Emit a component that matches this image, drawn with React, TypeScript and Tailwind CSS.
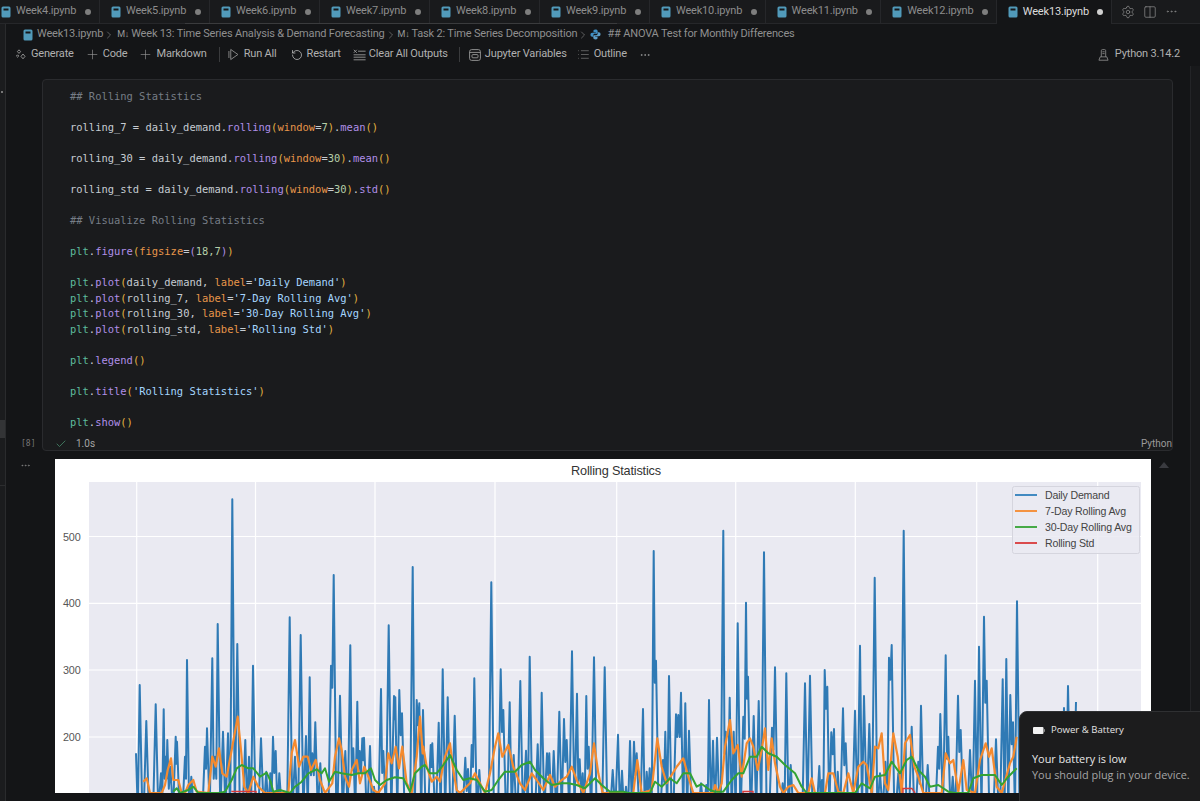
import { ChevronRight, Check, Ellipsis, List, Plus, RotateCcw, Settings, Columns2 } from 'lucide-react';

type Point = [number, number];

// chart points are read off three crops of the plot, so each strip has its own origin
const strip = (originX: number, pts: Point[]): Point[] =>
  pts.map(([x, y]) => [originX + x / 3, 490 + y / 3]);

const blue: Point[] = [
  ...strip(125, [[33,790],[44,585],[64,693],[92,643],[108,850],[116,658],[122,800],[127,750],[136,830],[152,740],[156,755],[180,800],[186,510],[199,860],[240,770],[246,715],[262,505],[270,800],[278,402],[294,725],[309,730],[322,28],[337,462],[361,750],[372,800],[384,527],[408,745],[424,845],[436,850],[444,740],[452,783],[463,850],[494,382],[510,800],[527,435],[543,738],[554,562],[562,790],[571,697],[586,820],[618,527],[626,255],[645,617],[661,783],[676,466],[685,775],[697,635],[704,783],[712,745],[717,743],[735,768],[747,890],[768,597],[775,783],[791,406],[807,618],[811,622],[823,600],[831,670],[863,231],[875,630],[883,640],[894,660]]),
  ...strip(420, [[32,765],[37,760],[56,698],[68,538],[83,622],[104,677],[136,803],[144,837],[155,765],[163,565],[178,840],[214,277],[242,538],[250,660],[269,637],[281,795],[301,573],[318,782],[329,500],[353,763],[365,608],[381,790],[388,790],[401,783],[418,665],[432,687],[440,750],[456,484],[471,611],[479,808],[488,850],[499,618],[506,770],[522,502],[554,532],[578,840],[594,734],[606,842],[618,890],[630,753],[642,755],[650,790],[669,657],[680,845],[689,835],[701,183],[708,512],[729,810],[736,725],[747,558],[768,673],[775,675],[783,608],[796,640],[807,722],[843,880],[859,885],[867,630],[879,752],[891,743]]),
  ...strip(715, [[25,122],[32,725],[44,623],[56,725],[68,400],[85,680],[93,338],[99,560],[116,678],[131,633],[147,187],[171,713],[180,532],[203,880],[214,550],[227,825],[270,580],[285,557],[313,828],[321,870],[329,540],[337,590],[349,727],[357,717],[368,845],[384,655],[392,760],[420,662],[435,467],[447,618],[463,702],[479,263],[495,850],[511,815],[522,503],[530,465],[550,850],[566,122],[590,710],[610,815],[618,647],[638,825],[669,770],[676,672],[692,496],[700,740],[713,860],[729,617],[737,720],[765,780],[780,572],[792,470],[807,380],[815,572],[843,748],[863,568],[874,507],[886,615],[894,697],[906,334]]),
  [1064, 708],
  [1068, 686],
  [1076, 702],
];

const orange: Point[] = [
  ...strip(125, [[55,875],[65,865],[75,909],[110,909],[120,885],[128,840],[138,805],[145,870],[160,870],[170,909],[180,909],[190,885],[205,870],[215,905],[250,909],[262,800],[272,830],[282,775],[292,850],[305,860],[320,780],[338,680],[348,780],[358,890],[370,909],[385,860],[400,890],[420,909],[470,909],[490,909],[500,790],[510,750],[522,830],[535,800],[548,800],[558,840],[572,810],[585,870],[600,909],[622,880],[630,800],[642,745],[650,780],[660,860],[672,890],[680,840],[695,810],[705,880],[718,830],[730,860],[745,900],[760,909],[780,880],[790,790],[800,820],[812,770],[822,835],[832,770],[845,880],[860,909],[875,800],[885,680],[893,790]]),
  ...strip(420, [[10,770],[20,830],[35,875],[50,860],[60,875],[75,800],[90,760],[100,840],[110,900],[120,909],[150,880],[165,850],[180,880],[195,909],[210,850],[225,770],[235,730],[247,800],[265,765],[280,830],[300,880],[315,900],[335,850],[350,870],[370,900],[390,855],[405,890],[425,870],[440,860],[455,830],[470,870],[490,909],[510,850],[522,760],[535,850],[548,909],[640,909],[652,810],[665,909],[695,900],[712,745],[725,830],[740,880],[755,855],[770,830],[790,805],[805,860],[820,909],[880,909]]),
  ...strip(715, [[0,885],[10,909],[20,880],[30,770],[45,690],[55,790],[68,765],[80,860],[95,760],[105,745],[115,770],[128,840],[140,780],[150,715],[160,840],[170,745],[180,820],[195,890],[205,909],[220,890],[235,885],[250,909],[280,909],[290,865],[300,909],[330,909],[340,850],[355,850],[370,905],[385,909],[400,850],[415,909],[430,830],[445,815],[455,825],[470,909],[480,770],[490,775],[500,730],[510,880],[520,900],[535,730],[548,800],[560,909],[570,760],[585,735],[598,830],[610,860],[625,909],[680,909],[692,790],[705,820],[715,810],[730,905],[745,810],[755,900],[780,909],[795,810],[812,760],[822,800],[830,775],[845,890],[860,909],[885,820],[895,800],[905,740]]),
];

const green: Point[] = [
  ...strip(125, [[145,905],[155,895],[165,909],[190,900],[205,890],[220,909],[280,909],[300,905],[320,870],[335,835],[350,825],[370,835],[385,835],[405,860],[425,848],[437,875],[445,905],[465,900],[495,909],[510,890],[530,875],[550,850],[575,838],[590,850],[600,835],[612,875],[630,845],[650,850],[680,855],[700,850],[720,850],[738,835],[750,870],[765,885],[785,870],[810,862],[835,865],[855,905],[870,850],[890,830],[900,825]]),
  ...strip(420, [[30,850],[50,850],[70,825],[90,795],[110,840],[130,870],[150,865],[170,870],[195,905],[215,900],[235,870],[255,845],[285,845],[305,825],[330,815],[345,840],[370,865],[395,885],[425,880],[445,880],[470,885],[495,895],[525,865],[545,885],[570,905],[610,905],[625,909],[690,909],[705,875],[725,890],[750,865],[770,880],[790,850],[810,850],[830,890],[845,882],[870,900]]),
  ...strip(715, [[0,905],[25,905],[50,870],[70,850],[85,850],[105,800],[125,800],[140,770],[160,790],[185,800],[210,825],[240,850],[260,890],[275,909],[420,909],[440,880],[465,895],[480,860],[510,855],[530,815],[555,850],[575,810],[590,800],[610,840],[630,860],[645,890],[670,885],[700,905],[720,909],[760,909],[775,865],[800,855],[840,855],[860,885],[880,860],[905,835]]),
];

const spikes = (peaks: Point[]) => {
  const out: Point[] = [];
  const floor = 812;
  peaks.forEach(([x, y], i) => {
    if (i > 0) {
      const [px, py] = peaks[i - 1];
      const gap = x - px;
      if (gap <= 3) out.push([px + gap / 2, Math.max(y, py) + 22]);
      else if (gap <= 5.5) out.push([px + gap / 2, floor]);
      else {
        out.push([px + 2.6, floor]);
        out.push([x - 2.6, floor]);
      }
    }
    out.push([x, y]);
  });
  return out;
};

const toPath = (pts: Point[]) => pts.map(([x, y]) => `${x.toFixed(1)},${y.toFixed(1)}`).join(' ');

const gridX = [136.7, 255.5, 375, 495, 616.7, 735.7, 855.3, 976.7, 1097.7];
const ticks = [
  { label: '500', y: 536.5 },
  { label: '400', y: 603.3 },
  { label: '300', y: 670 },
  { label: '200', y: 737 },
];
const legend = [
  { label: 'Daily Demand', color: '#2f7fbb', y: 495 },
  { label: '7-Day Rolling Avg', color: '#f58a2e', y: 511 },
  { label: '30-Day Rolling Avg', color: '#35a335', y: 527 },
  { label: 'Rolling Std', color: '#d8393a', y: 543 },
];

const V = 'text-[#c6ccd2]';
const C = 'text-[#767d86]';
const F = 'text-[#b08fe8]';
const P = 'text-[#e3b341]';
const K = 'text-[#e8964a]';
const M = 'text-[#5dbb9d]';
const N = 'text-[#b5cea8]';
const S = 'text-[#a5d6ff]';
const Q = 'text-[#b08fe8]';

type Tok = [string, string];

const plotLine = (arg: string, label: string): Tok[] => [
  ['plt', M], ['.', V], ['plot', F], ['(', P], [arg + ', ', V], ['label', K], ['=', V], [`'${label}'`, S], [')', P],
];

const code: Tok[][] = [
  [['## Rolling Statistics', C]],
  [],
  [['rolling_7 = daily_demand.', V], ['rolling', F], ['(', P], ['window', K], ['=', V], ['7', N], [')', P], ['.', V], ['mean', F], ['()', P]],
  [],
  [['rolling_30 = daily_demand.', V], ['rolling', F], ['(', P], ['window', K], ['=', V], ['30', N], [')', P], ['.', V], ['mean', F], ['()', P]],
  [],
  [['rolling_std = daily_demand.', V], ['rolling', F], ['(', P], ['window', K], ['=', V], ['30', N], [')', P], ['.', V], ['std', F], ['()', P]],
  [],
  [['## Visualize Rolling Statistics', C]],
  [],
  [['plt', M], ['.', V], ['figure', F], ['(', P], ['figsize', K], ['=', V], ['(', Q], ['18,7', N], [')', Q], [')', P]],
  [],
  plotLine('daily_demand', 'Daily Demand'),
  plotLine('rolling_7', '7-Day Rolling Avg'),
  plotLine('rolling_30', '30-Day Rolling Avg'),
  plotLine('rolling_std', 'Rolling Std'),
  [],
  [['plt', M], ['.', V], ['legend', F], ['()', P]],
  [],
  [['plt', M], ['.', V], ['title', F], ['(', P], ["'Rolling Statistics'", S], [')', P]],
  [],
  [['plt', M], ['.', V], ['show', F], ['()', P]],
];

const tabs = ['Week4', 'Week5', 'Week6', 'Week7', 'Week8', 'Week9', 'Week10', 'Week11', 'Week12', 'Week13'];

function NotebookIcon({ className = '' }: { className?: string }) {
  return (
    <svg viewBox="0 0 10 12" className={`w-[10px] h-[12px] shrink-0 ${className}`}>
      <rect x="0.5" y="0.5" width="9" height="11" rx="1.5" fill="#519aba" />
      <rect x="2.5" y="2.5" width="5" height="2" fill="#16181b" />
    </svg>
  );
}

function SparkIcon() {
  return (
    <svg viewBox="0 0 12 12" className="w-[12px] h-[12px] text-[#9a9a9a]" fill="none" stroke="currentColor" strokeWidth="0.9">
      <path d="M4 0.8 5.6 2.6 4 4.4 2.4 2.6Z" />
      <path d="M2.6 5.8 3.8 7 2.6 8.2 1.4 7Z" />
      <path d="M8 5 10 7.4 8 9.8 6 7.4Z" />
    </svg>
  );
}

function RunAllIcon() {
  return (
    <svg viewBox="0 0 12 14" className="w-[11px] h-[13px] text-[#8d8d8d]" fill="none" stroke="currentColor" strokeWidth="1">
      <path d="M3 1.5 10.8 7 3 12.5Z" />
      <path d="M1 3.2V10.8" />
    </svg>
  );
}

function ClearIcon() {
  return (
    <svg viewBox="0 0 13 12" className="w-[13px] h-[12px] text-[#9a9a9a]" fill="none" stroke="currentColor" strokeWidth="0.9">
      <path d="M0.8 0.8 3.8 3.8M3.8 0.8 0.8 3.8" />
      <path d="M5 2.2H12.6M0.6 5.8H12.6M0.6 8.2H12.6M0.6 10.8H12.6" />
    </svg>
  );
}

function VariablesIcon() {
  return (
    <svg viewBox="0 0 12 12" className="w-[12px] h-[12px] text-[#9a9a9a]" fill="none" stroke="currentColor" strokeWidth="0.9">
      <rect x="0.6" y="0.6" width="10.8" height="10.8" rx="2" />
      <path d="M0.6 3.4H11.4" />
      <rect x="3" y="5.6" width="6" height="3.2" rx="0.8" />
    </svg>
  );
}

function EnvIcon() {
  return (
    <svg viewBox="0 0 12 13" className="w-[11px] h-[12px] text-[#8f8f8f]" fill="none" stroke="currentColor" strokeWidth="0.9">
      <path d="M3.6 8.5V1.8A1.2 1.2 0 0 1 4.8 0.6H7.2A1.2 1.2 0 0 1 8.4 1.8V8.5" />
      <path d="M4.8 3H7.2M4.8 5H7.2" />
      <path d="M2.4 8.5H9.6L11 12.2H1Z" />
    </svg>
  );
}

function PythonIcon() {
  return (
    <svg viewBox="0 0 12 12" className="w-[11px] h-[11px] shrink-0">
      <path d="M6 0.5C3.8 0.5 3.8 1.5 3.8 2.4V3.5H6.3V4H2.4C1.2 4 .5 5 .5 6.2S1.2 8.4 2.4 8.4H3.5V7C3.5 6 4.3 5.3 5.2 5.3H7.4C8 5.3 8.4 4.8 8.4 4.2V2.4C8.4 1.2 7.4 .5 6 .5Z" fill="#3f8fc4" />
      <path d="M6 11.5C8.2 11.5 8.2 10.5 8.2 9.6V8.5H5.7V8H9.6C10.8 8 11.5 7 11.5 5.8S10.8 3.6 9.6 3.6H8.5V5C8.5 6 7.7 6.7 6.8 6.7H4.6C4 6.7 3.6 7.2 3.6 7.8V9.6C3.6 10.8 4.6 11.5 6 11.5Z" fill="#5d9fc9" />
    </svg>
  );
}

function Tab({ name, active }: { name: string; active: boolean }) {
  const wide = name.length > 5;
  return (
    <div
      className={`flex h-[24px] shrink-0 items-center pl-[11px] pr-[8px] border-r border-[#26272a] ${wide ? 'w-[115.6px]' : 'w-[110px]'} ${active ? 'bg-[#141517] text-[#dcdcdc]' : 'bg-[#191a1c] text-[#8c8c8c] border-b'}`}
    >
      <NotebookIcon />
      <span className="ml-[5px] mr-auto">{name}.ipynb</span>
      <span className={`w-[6px] h-[6px] rounded-full ${active ? 'bg-[#d0d0d0]' : 'bg-[#7e7e7e]'}`} />
    </div>
  );
}

function Chart() {
  return (
    <svg viewBox="55 459 1096 334" className="block w-[1096px] h-[334px] bg-white">
      <rect x="89" y="482" width="1052" height="311" fill="#eaeaf2" />
      {gridX.map((x) => (
        <line key={x} x1={x} x2={x} y1="482" y2="793" stroke="#ffffff" strokeWidth="1.2" />
      ))}
      {ticks.map((t) => (
        <g key={t.label}>
          <line x1="89" x2="1141" y1={t.y} y2={t.y} stroke="#ffffff" strokeWidth="1.2" />
          <text x="80.5" y={t.y + 4} textAnchor="end" fontSize="10.8" fill="#555" fontFamily="'Liberation Sans', sans-serif">
            {t.label}
          </text>
        </g>
      ))}
      <text x="616" y="475" textAnchor="middle" fontSize="12.7" fill="#333" fontFamily="'Liberation Sans', sans-serif">
        Rolling Statistics
      </text>
      <polyline points={toPath(spikes(blue))} fill="none" stroke="#2f7ab5" strokeWidth="2" strokeLinejoin="round" />
      <polyline points={toPath(orange)} fill="none" stroke="#f58a2e" strokeWidth="2.2" strokeLinejoin="round" />
      <polyline points={toPath(green)} fill="none" stroke="#33a333" strokeWidth="2" strokeLinejoin="round" />
      <path d="M232 792V791.5H256V793M743 793V791.5H753V793M903 793V788.5H912L915 793" fill="none" stroke="#d8393a" strokeWidth="1.4" />
      <rect x="1012.5" y="486.5" width="127" height="67" rx="2" fill="#eaeaf2" fillOpacity="0.85" stroke="#d5d5de" />
      {legend.map((l) => (
        <g key={l.label}>
          <line x1="1015" x2="1037" y1={l.y} y2={l.y} stroke={l.color} strokeWidth="1.8" />
          <text x="1045" y={l.y + 4} fontSize="10.6" fill="#444" fontFamily="'Liberation Sans', sans-serif">
            {l.label}
          </text>
        </g>
      ))}
    </svg>
  );
}

export default function App() {
  return (
    <div className="relative flex h-[801px] w-[1200px] overflow-hidden bg-[#141517] font-['Roboto',sans-serif] text-[11px] tracking-[-0.18px] text-[#a8a8a8]">
      <div className="flex w-[6px] shrink-0 flex-col border-r border-[#2a2b2d] bg-[#1b1c1e]">
        <div className="ml-[1px] mt-[91px] h-[2px] w-[2px] bg-[#777]" />
        <div className="mt-[327px] h-[18px] w-full bg-[#333436]" />
        <div className="mt-[47px] h-px w-full bg-[#2c2d2f]" />
      </div>

      <div className="flex min-w-0 flex-1 flex-col">
        <div className="relative flex h-[24px] shrink-0 bg-[#191a1c]">
          <div className="-ml-[16px] flex">
            {tabs.map((t) => (
              <Tab key={t} name={t} active={t === 'Week13'} />
            ))}
          </div>
          <div className="flex flex-1 items-center gap-[8px] border-b border-[#26272a] pl-[9px] text-[#8f8f8f]">
            <Settings size={14} strokeWidth={1.2} />
            <Columns2 size={14} strokeWidth={1.2} />
            <Ellipsis size={13} strokeWidth={1.2} />
          </div>
          <div className="absolute bottom-0 left-[179px] h-px w-[432px] bg-[#3a3b3d]" />
        </div>

        <div className="flex h-[21px] shrink-0 items-center pl-[17px] whitespace-nowrap text-[#8f8f8f]">
          <NotebookIcon />
          <span className="ml-[4px]">Week13.ipynb</span>
          <ChevronRight size={12} strokeWidth={1.2} />
          <span className="ml-[2px] text-[9px] text-[#9a9a9a]">M↓</span>
          <span className="ml-[2px]">Week 13: Time Series Analysis &amp; Demand Forecasting</span>
          <ChevronRight size={12} strokeWidth={1.2} />
          <span className="ml-[1px] text-[9px] text-[#9a9a9a]">M↓</span>
          <span className="ml-[2px]">Task 2: Time Series Decomposition</span>
          <ChevronRight size={12} strokeWidth={1.2} className="mr-[1px]" />
          <PythonIcon />
          <span className="ml-[6px]">## ANOVA Test for Monthly Differences</span>
        </div>

        <div className="flex h-[19px] shrink-0 items-center whitespace-nowrap pl-[9px] pr-[20px] text-[#b0b0b0]">
          <SparkIcon />
          <span className="ml-[4px]">Generate</span>
          <Plus size={15} strokeWidth={1} className="ml-[11px] text-[#9a9a9a]" />
          <span className="ml-[3px]">Code</span>
          <Plus size={15} strokeWidth={1} className="ml-[11px] text-[#9a9a9a]" />
          <span className="ml-[3px]">Markdown</span>
          <div className="ml-[12px] mr-[8px] h-[15px] w-px bg-[#3a3b3d]" />
          <RunAllIcon />
          <span className="ml-[5px]">Run All</span>
          <RotateCcw size={12} strokeWidth={1.5} className="ml-[14px] text-[#c0c0c0]" />
          <span className="ml-[4px]">Restart</span>
          <span className="ml-[12px]"><ClearIcon /></span>
          <span className="ml-[3px]">Clear All Outputs</span>
          <div className="ml-[11px] mr-[9px] h-[15px] w-px bg-[#3a3b3d]" />
          <VariablesIcon />
          <span className="ml-[4px]">Jupyter Variables</span>
          <List size={13} strokeWidth={1} className="ml-[10px] text-[#9a9a9a]" />
          <span className="ml-[4px]">Outline</span>
          <Ellipsis size={12} strokeWidth={1.2} className="ml-[12px]" />
          <span className="ml-auto"><EnvIcon /></span>
          <span className="ml-[6px]">Python 3.14.2</span>
        </div>

        <div className="ml-[36px] mt-[15px] h-[372px] w-[1131px] shrink-0 rounded-[4px] border border-[#2a2b2e] bg-[#1a1b1d]">
          <div className="pl-[27px] pt-[9px] font-['DejaVu_Sans_Mono',monospace] text-[10.45px] leading-[15.5px] tracking-normal">
            {code.map((line, i) => (
              <div key={i} className="h-[15.5px] whitespace-pre">
                {line.map(([text, color], j) => (
                  <span key={j} className={color}>
                    {text}
                  </span>
                ))}
              </div>
            ))}
          </div>
        </div>

        <div className="relative -mt-[17px] flex h-[17px] shrink-0 items-center pl-[49px] pr-[28px] pt-[2px] text-[10px] tracking-normal">
          <span className="absolute left-[15px] top-[4px] font-['DejaVu_Sans_Mono',monospace] text-[8px] text-[#767676]">[8]</span>
          <Check size={12} strokeWidth={1.4} className="text-[#4d9a77]" />
          <span className="ml-[9px] text-[#a5a5a5]">1.0s</span>
          <span className="ml-auto text-[#9a9a9a]">Python</span>
        </div>

        <div className="relative mt-[8px] flex">
          <Ellipsis size={11} strokeWidth={1.4} className="absolute left-[14px] top-[1px] text-[#8a8a8a]" />
          <div className="ml-[49px]">
            <Chart />
          </div>
          <div className="ml-[8px] mt-[3px] h-0 w-0 border-x-[5px] border-b-[6px] border-x-transparent border-b-[#3a3b40]" />
        </div>
      </div>

      <div className="absolute bottom-0 left-[1190px] top-[66px] w-[10px] border-l border-[#232427] bg-[#18191b]" />

      <div className="absolute left-[1019px] top-[711px] h-[100px] w-[190px] rounded-tl-[8px] border border-[#2f3032] bg-[#1c1c1d] font-['Open_Sans',sans-serif] tracking-normal">
        <div className="ml-[13px] mt-[11px] flex items-center text-[9.6px] text-[#e4e4e4]">
          <svg viewBox="0 0 12 7" className="h-[7px] w-[12px]">
            <rect x="0" y="0" width="10.5" height="7" rx="1" fill="#f2f2f2" />
            <rect x="11" y="2.2" width="1" height="2.6" fill="#8a8a8a" />
          </svg>
          <span className="ml-[6px]">Power &amp; Battery</span>
        </div>
        <div className="ml-[12px] mt-[14px] text-[10.9px] leading-[16px] whitespace-nowrap text-[#e8e8e8]">Your battery is low</div>
        <div className="ml-[12px] text-[10.9px] leading-[16px] whitespace-nowrap text-[#a6a6a6]">You should plug in your device.</div>
      </div>
    </div>
  );
}
